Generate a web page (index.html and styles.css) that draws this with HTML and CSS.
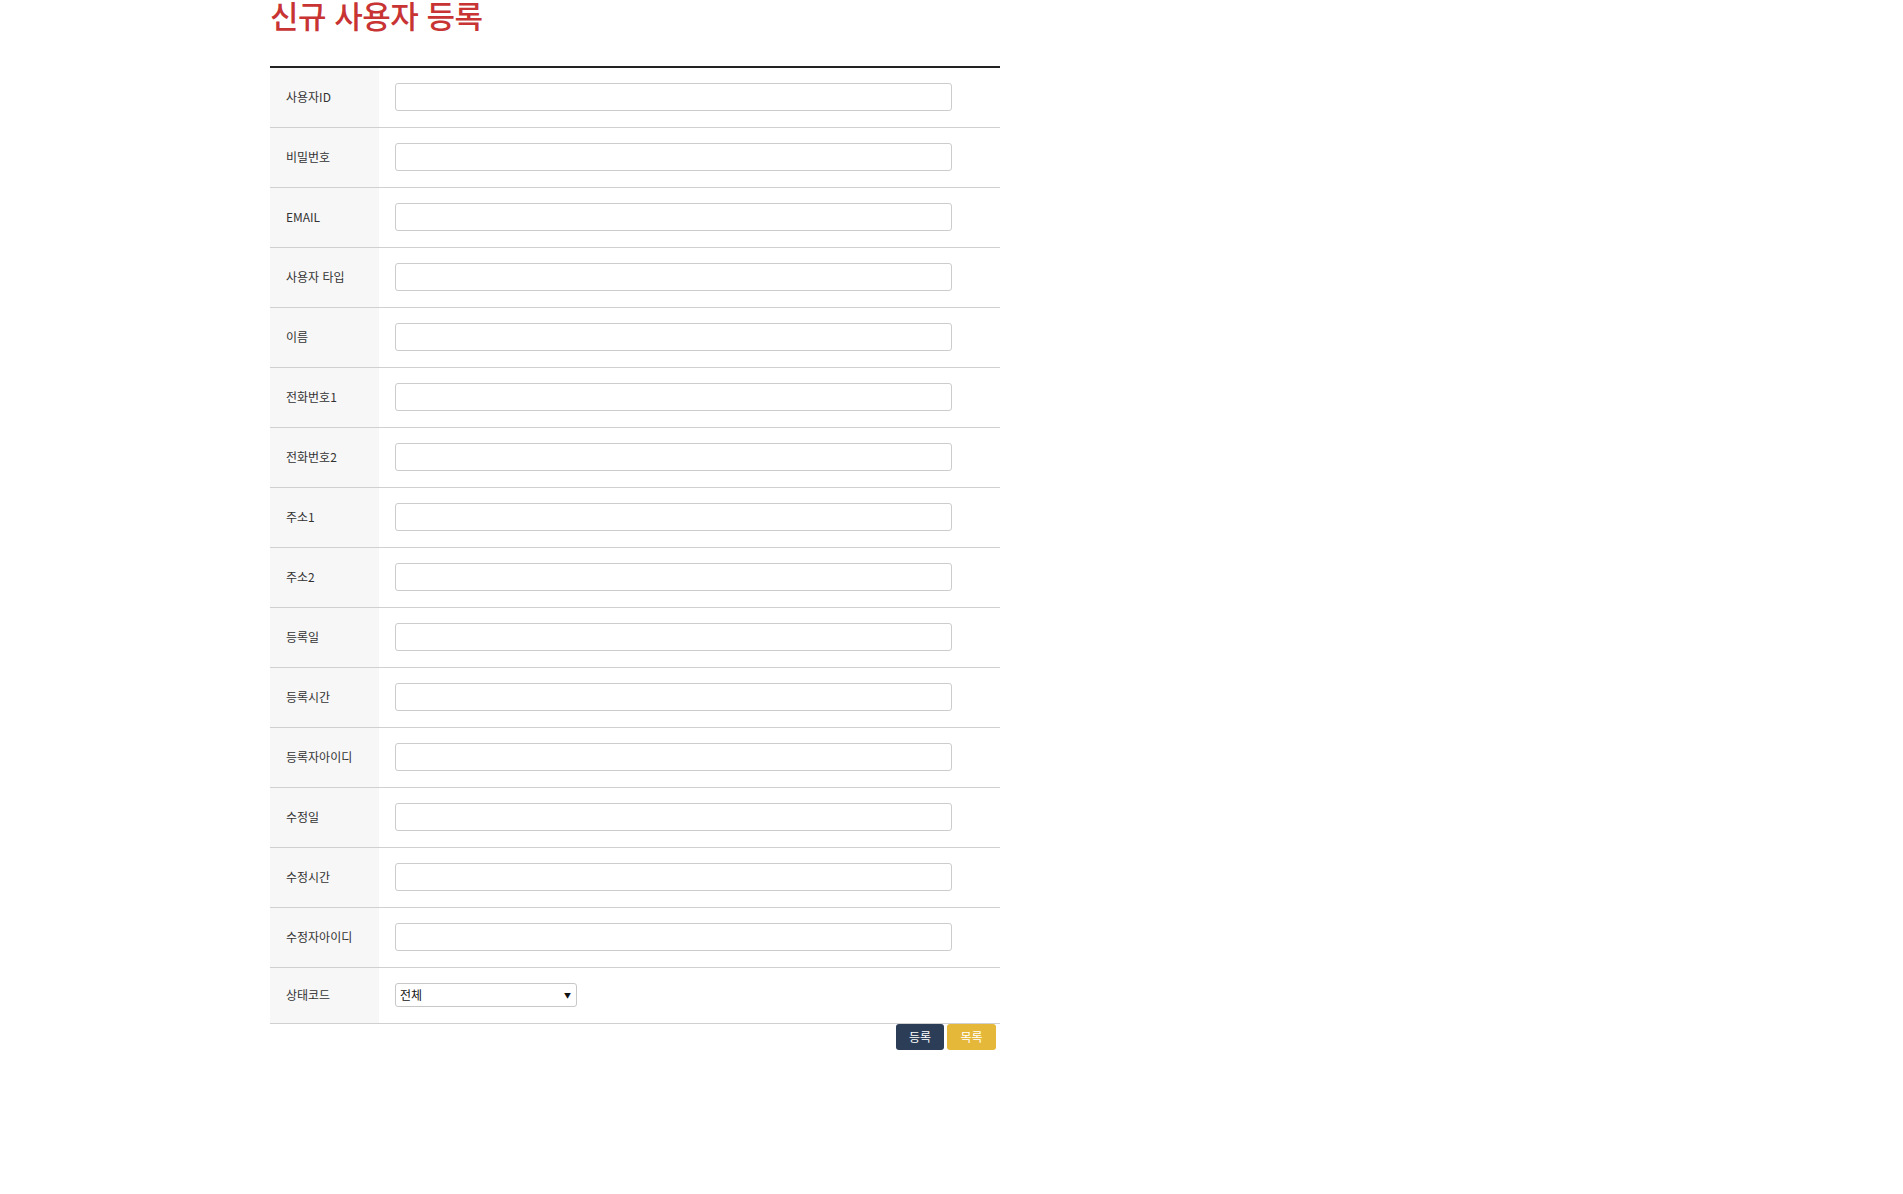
FILE: index.html
```html
<!DOCTYPE html>
<html lang="ko">
<head>
<meta charset="utf-8">
<title>신규 사용자 등록</title>
<link rel="stylesheet" href="styles.css">
</head>
<body>
<div class="wrap">
  <h2 class="title">신규 사용자 등록</h2>
  <table class="form">
    <tbody>
      <tr><th>사용자ID</th><td><input type="text" class="field"></td></tr>
      <tr><th>비밀번호</th><td><input type="text" class="field"></td></tr>
      <tr><th>EMAIL</th><td><input type="text" class="field"></td></tr>
      <tr><th>사용자 타입</th><td><input type="text" class="field"></td></tr>
      <tr><th>이름</th><td><input type="text" class="field"></td></tr>
      <tr><th>전화번호1</th><td><input type="text" class="field"></td></tr>
      <tr><th>전화번호2</th><td><input type="text" class="field"></td></tr>
      <tr><th>주소1</th><td><input type="text" class="field"></td></tr>
      <tr><th>주소2</th><td><input type="text" class="field"></td></tr>
      <tr><th>등록일</th><td><input type="text" class="field"></td></tr>
      <tr><th>등록시간</th><td><input type="text" class="field"></td></tr>
      <tr><th>등록자아이디</th><td><input type="text" class="field"></td></tr>
      <tr><th>수정일</th><td><input type="text" class="field"></td></tr>
      <tr><th>수정시간</th><td><input type="text" class="field"></td></tr>
      <tr><th>수정자아이디</th><td><input type="text" class="field"></td></tr>
      <tr class="last">
        <th>상태코드</th>
        <td>
          <span class="select-box">
            <select class="select"><option>전체</option></select>
            <span class="arrow">&#9660;</span>
          </span>
        </td>
      </tr>
    </tbody>
  </table>
  <div class="actions">
    <button type="button" class="btn btn-navy">등록</button>
    <button type="button" class="btn btn-gold">목록</button>
  </div>
</div>
</body>
</html>
```

FILE: styles.css
```css
html, body {
  margin: 0;
  padding: 0;
  background: #ffffff;
}

body {
  font-family: "Noto Sans CJK KR", "Noto Sans", sans-serif;
  color: #333333;
}

.wrap {
  width: 730px;
  margin-left: 270px;
}

.title {
  margin: 0 0 36px 0;
  font-size: 31px;
  line-height: 30px;
  font-weight: 500;
  color: #c83333;
  letter-spacing: -0.5px;
}

.form {
  width: 730px;
  border-collapse: collapse;
  border-top: 2px solid #222222;
}

.form tr {
  border-bottom: 1px solid #d0d0d0;
}

.form th {
  width: 93px;
  padding: 0 0 3px 16px;
  background: #f7f7f7;
  text-align: left;
  font-weight: 400;
  font-size: 12px;
  color: #333333;
  vertical-align: middle;
  white-space: nowrap;
}

.form td {
  padding: 15px 16px 16px 16px;
  vertical-align: middle;
}

.field {
  display: block;
  box-sizing: border-box;
  width: 557px;
  height: 28px;
  margin: 0;
  padding: 0 6px;
  border: 1px solid #cccccc;
  border-radius: 3px;
  background: #ffffff;
  font-family: inherit;
  font-size: 12px;
}

.select-box {
  position: relative;
  display: block;
  width: 182px;
  height: 24px;
}

.select {
  -webkit-appearance: none;
  appearance: none;
  display: block;
  box-sizing: border-box;
  width: 182px;
  height: 24px;
  margin: 0;
  padding: 0 4px 1px;
  border: 1px solid #c8c8c8;
  border-radius: 3px;
  background: #ffffff;
  font-family: "Noto Sans CJK KR", sans-serif;
  font-size: 12px;
  color: #111111;
}

.arrow {
  position: absolute;
  right: 6px;
  top: 8px;
  font-size: 7px;
  line-height: 8px;
  color: #111111;
  pointer-events: none;
}

.actions {
  display: flex;
  justify-content: flex-end;
  gap: 3px;
  padding-right: 4px;
}

.btn {
  height: 26px;
  padding: 0;
  border: none;
  border-radius: 3px;
  color: #ffffff;
  font-family: "Noto Sans CJK KR", sans-serif;
  font-size: 12px;
  line-height: 26px;
  cursor: pointer;
}

.btn-navy {
  width: 48px;
  background: #2c3d58;
}

.btn-gold {
  width: 49px;
  background: #e6b83a;
}
```
